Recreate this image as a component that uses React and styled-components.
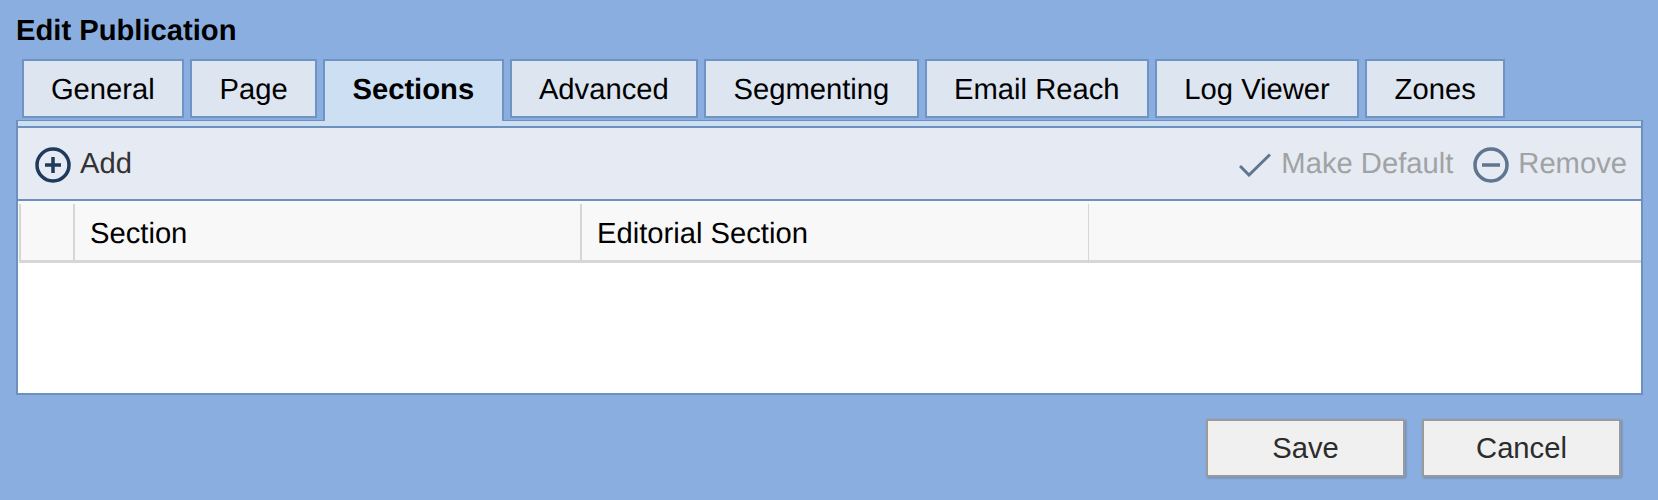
import styled, { createGlobalStyle } from 'styled-components'

const GlobalStyle = createGlobalStyle`
	html, body {
		margin: 0;
		background: #8aaedf;
	}
	* {
		box-sizing: border-box;
	}
`

const tabs = ['General', 'Page', 'Sections', 'Advanced', 'Segmenting', 'Email Reach', 'Log Viewer', 'Zones']

const PlusIcon = () => (
	<svg width="36" height="36" viewBox="0 0 36 36" fill="none" stroke="#1f3a5c" strokeWidth="3.5">
		<circle cx="18" cy="18" r="16" />
		<path d="M18 10v16M10 18h16" />
	</svg>
)

const CheckIcon = () => (
	<svg width="32" height="24" viewBox="0 0 32 24" fill="none" stroke="#5f7590" strokeWidth="3">
		<path d="M1 13l9 9L31 1.500" />
	</svg>
)

const MinusIcon = () => (
	<svg width="36" height="36" viewBox="0 0 36 36" fill="none" stroke="#5f7590" strokeWidth="3.5">
		<circle cx="18" cy="18" r="16" />
		<path d="M9 18h18" />
	</svg>
)

export default function App() {
	return (
		<Page>
			<GlobalStyle />
			<Title>Edit Publication</Title>
			<TabBar>
				{tabs.map(tab => (
					<Tab key={tab} $active={tab === 'Sections'}>
						{tab}
					</Tab>
				))}
			</TabBar>
			<Panel>
				<Toolbar>
					<ToolButton>
						<PlusIcon />
						Add
					</ToolButton>
					<ToolGroup>
						<ToolButton $disabled $gap={10}>
							<CheckIcon />
							Make Default
						</ToolButton>
						<ToolButton $disabled>
							<MinusIcon />
							Remove
						</ToolButton>
					</ToolGroup>
				</Toolbar>
				<TableHeader>
					<HeaderCell $width={54} />
					<HeaderCell $width={507}>Section</HeaderCell>
					<HeaderCell $width={508}>Editorial Section</HeaderCell>
					<HeaderCell $grow />
				</TableHeader>
				<TableBody />
			</Panel>
			<Footer>
				<Button>Save</Button>
				<Button>Cancel</Button>
			</Footer>
		</Page>
	)
}

const Page = styled.div`
	width: 1658px;
	height: 500px;
	padding: 15px 15px 0 16px;
	overflow: hidden;
	background: #8aaedf;
	font-family: 'Liberation Sans', Arial, sans-serif;
	font-size: 29.2px;
	color: #000;
	text-rendering: geometricPrecision;
`

const Title = styled.h1`
	margin: 0;
	height: 33px;
	font-size: 29.2px;
	line-height: 33px;
	font-weight: 700;
`

const TabBar = styled.div`
	display: flex;
	align-items: flex-start;
	gap: 6px;
	height: 61px;
	margin: 11px 0 0 5.500px;
	position: relative;
	z-index: 1;
`

const Tab = styled.div`
	height: ${({ $active }) => ($active ? '62px' : '59px')};
	padding: 13px 27.400px 0;
	border: 2px solid #6f94c4;
	border-bottom: ${({ $active }) => ($active ? '0' : '2px solid #6f94c4')};
	background: ${({ $active }) => ($active ? '#cddff2' : '#dde5f0')};
	font-weight: ${({ $active }) => ($active ? 700 : 400)};
	line-height: 33px;
	white-space: nowrap;
`

const Panel = styled.div`
	height: 275px;
	padding-top: 5px;
	border: 2px solid #6d90bd;
	border-top-width: 1px;
	background: #cddff2;
	display: flex;
	flex-direction: column;
`

const Toolbar = styled.div`
	display: flex;
	justify-content: space-between;
	align-items: center;
	height: 75px;
	padding: 2px 14px 0 17px;
	flex-shrink: 0;
	background: #e6eaf3;
	border-top: 2px solid #6d90bd;
	border-bottom: 2px solid #6d90bd;
`

const ToolGroup = styled.div`
	display: flex;
	align-items: center;
	gap: 20px;
`

const ToolButton = styled.div`
	display: flex;
	align-items: center;
	gap: ${({ $gap }) => $gap ?? 9}px;
	color: ${({ $disabled }) => ($disabled ? '#a0a2a4' : '#333')};
`

const TableHeader = styled.div`
	display: flex;
	height: 62px;
	flex-shrink: 0;
	padding: 3px 0 0 1px;
	background: #f8f8f8;
`

const HeaderCell = styled.div`
	width: ${({ $width }) => ($width ? `${$width}px` : 'auto')};
	flex: ${({ $grow }) => ($grow ? 1 : '0 0 auto')};
	padding: 14px 0 0 15px;
	border-left: 2px solid #d6d6d6;
	border-bottom: 3px solid #d6d6d6;
	line-height: 33px;
	color: #000;

	&:last-child {
		border-left-width: 1px;
	}
`

const TableBody = styled.div`
	flex: 1;
	background: #fff;
`

const Footer = styled.div`
	display: flex;
	justify-content: flex-end;
	gap: 17px;
	margin: 24px 22px 0 0;
`

const Button = styled.button`
	width: 199px;
	height: 58px;
	padding: 0;
	border: 2px solid #9a9a9a;
	background: #f0f0f0;
	box-shadow: 1px 1px 2px rgba(50, 70, 100, 0.35);
	font-family: inherit;
	font-size: 29.2px;
	color: #2c2c2c;
`
